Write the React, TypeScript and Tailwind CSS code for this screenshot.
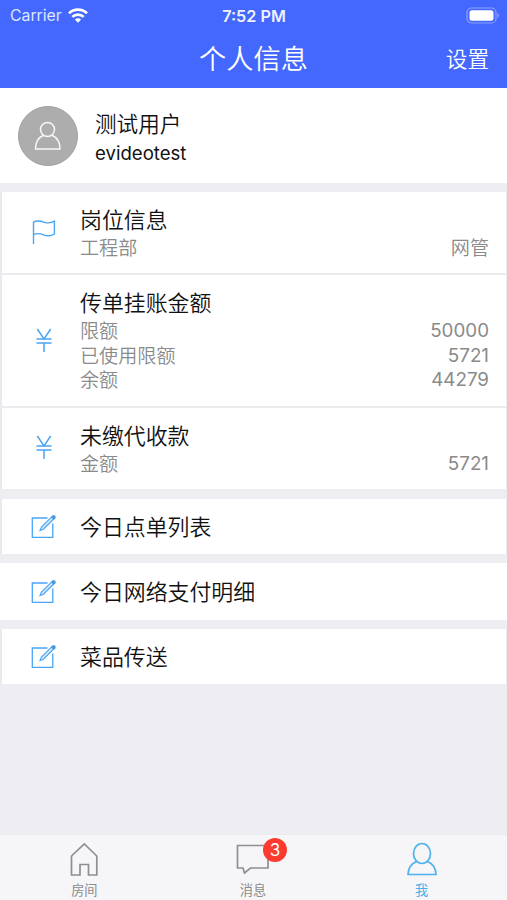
import type { ReactNode } from "react";

const YenIcon = () => (
  <svg width="16" height="26" viewBox="0 0 16 26" fill="none" stroke="#4aa5f5" strokeWidth="1.5">
    <path d="M1.300 1 8 11 14.700 1M.5 11h15M.5 15h15M8 15v9" />
  </svg>
);

const FlagIcon = () => (
  <svg width="24" height="26" viewBox="0 0 24 26" fill="none" stroke="#4aa5f5" strokeWidth="1.4">
    <path d="M1.500 24V2.200C5-.2 9.500 1.300 12.500 2.300 16 3.400 19 3 22.400 1.200V14C18 16.800 14.500 16 11.500 14.800 8 13.400 5 13 1.500 14.600" />
  </svg>
);

const EditIcon = () => (
  <svg width="26" height="26" viewBox="0 0 26 26" fill="none" stroke="#4aa5f5" strokeWidth="1.3">
    <path d="M16.500 4H1.300v19.300h20.500V9.500" />
    <path d="M9 16.500 10.400 13 21.600 1.900 23.800 4 12.400 15.200Z" fill="#cfe6fc" strokeWidth="1.100" />
    <path d="m20 3.200 2.100-2 2.300.3.200 2.500-2 2Z" fill="#4a96dd" stroke="none" />
  </svg>
);

type Detail = { label: string; value: string };

function InfoCard({ icon, title, details }: { icon: ReactNode; title: string; details: Detail[] }) {
  return (
    <section className="flex border-r border-l-2 border-r-[#ececf0] border-l-[#e9e9ee] bg-white pt-[13px] pr-[17px] pb-[13px]">
      <div className="flex w-[78px] shrink-0 items-center justify-center pl-[6px]">{icon}</div>
      <div className="flex-1">
        <h2 className="text-[21.9px] leading-[31px] font-[350] text-[#111111]">{title}</h2>
        {details.map((d) => (
          <div key={d.label} className="flex items-center justify-between leading-[24.4px] font-[350] text-[#8a8a8a]">
            <span className="text-[19.1px]">{d.label}</span>
            {/^\d+$/.test(d.value) ? (
              <span className="text-[18.8px] font-normal">{d.value}</span>
            ) : (
              <span className="text-[19.1px]">{d.value}</span>
            )}
          </div>
        ))}
      </div>
    </section>
  );
}

function LinkRow({ title, className }: { title: string; className: string }) {
  return (
    <section className={`flex items-center bg-white ${className}`}>
      <div className="w-[49px] shrink-0">
        <EditIcon />
      </div>
      <h2 className="pt-[1px] text-[21.9px] leading-[31px] font-[350] text-[#111111]">{title}</h2>
    </section>
  );
}

export default function App() {
  return (
    <div className="flex h-[900px] w-[507px] flex-col overflow-hidden bg-[#eeeef2] font-['Inter','Noto_Sans_CJK_SC',sans-serif] font-normal">
      <header className="h-[88px] shrink-0 bg-[#4468fe] text-white">
        <div className="grid h-[30px] grid-cols-[1fr_auto_1fr] items-center pr-[7px] pl-[8px] text-[16px] leading-[30px]">
          <div className="flex items-center gap-[6px] pl-[2px] text-[#dfe6ff]">
            <span className="pt-[1px] text-[15.8px]">Carrier</span>
            <svg width="20" height="15" viewBox="0 0 20 15" fill="none" stroke="white" strokeWidth="2.700">
              <path d="M1 5.400a12.800 12.800 0 0 1 18 0M4.300 8.900a8.100 8.100 0 0 1 11.400 0" />
              <path d="M6.900 11.600a4.400 4.400 0 0 1 6.200 0L10 14.700Z" fill="white" stroke="none" />
            </svg>
          </div>
          <span className="text-center text-[16.200px] font-semibold text-[#eef1ff]">7:52 PM</span>
          <svg className="justify-self-end" width="34" height="18" viewBox="0 0 34 18">
            <rect x="1" y="1" width="29" height="15" rx="4.500" fill="none" stroke="#8ba1ff" strokeWidth="1.200" />
            <rect x="3.500" y="3.200" width="24" height="10.600" rx="2.500" fill="white" />
            <path d="M31.500 6q3 2.500 0 5Z" fill="#8ba1ff" />
          </svg>
        </div>
        <div className="grid h-[58px] grid-cols-[1fr_auto_1fr] items-center px-[18px]">
          <span />
          <h1 className="pt-[1px] text-[27.200px] leading-[56px] font-[350]">个人信息</h1>
          <span className="justify-self-end text-[21.600px] leading-[56px] font-[350]">设置</span>
        </div>
      </header>

      <main className="flex-1">
        <section className="flex h-[95px] items-center bg-white pl-[18px]">
          <div className="flex size-[60px] items-center justify-center rounded-full border border-[#9f9f9f] bg-[#adadad]">
            <svg width="28" height="30" viewBox="0 0 28 30" fill="none" stroke="#f7f7f7" strokeWidth="1.500">
              <circle cx="13.500" cy="8.500" r="7" />
              <path d="M9.500 14.300C4.500 16.500 1.500 21 1.500 28h24.500c0-7-3-11.500-8-13.700" />
            </svg>
          </div>
          <div className="pt-[4px] pl-[17px] text-[#111111]">
            <p className="text-[21.600px] leading-[31px] font-[350]">测试用户</p>
            <p className="text-[18.600px] leading-[27px]">evideotest</p>
          </div>
        </section>

        <div className="mt-[9px] flex flex-col gap-[2px] bg-[#ebebef]">
          <InfoCard icon={<FlagIcon />} title="岗位信息" details={[{ label: "工程部", value: "网管" }]} />
          <InfoCard
            icon={<YenIcon />}
            title="传单挂账金额"
            details={[
              { label: "限额", value: "50000" },
              { label: "已使用限额", value: "5721" },
              { label: "余额", value: "44279" },
            ]}
          />
          <InfoCard icon={<YenIcon />} title="未缴代收款" details={[{ label: "金额", value: "5721" }]} />
        </div>

        <LinkRow title="今日点单列表" className="mt-[10px] h-[55px] border-r border-l-2 border-r-[#ececf0] border-l-[#e9e9ee] pl-[29px]" />
        <LinkRow title="今日网络支付明细" className="mt-[9px] h-[57px] pl-[31px]" />
        <LinkRow title="菜品传送" className="mt-[9px] h-[55px] border-r border-l-2 border-r-[#ececf0] border-l-[#e9e9ee] pl-[29px]" />
      </main>

      <nav className="grid h-[66px] shrink-0 grid-cols-3 border-t border-[#e9e9ed] bg-[#f6f6f8] pt-[7px] pr-[1px] text-[13.200px] leading-[18px] text-[#8c8c8c]">
        <div className="flex flex-col items-center gap-[4px]">
          <svg width="28" height="35" viewBox="0 0 28 35" fill="none" stroke="#8f8f8f" strokeWidth="1.700">
            <path d="M1.500 33V14L14.300 2l12.500 12v19h-8.300V22.500H10v10.500Z" />
          </svg>
          <span>房间</span>
        </div>
        <div className="flex flex-col items-center gap-[4px]">
          <div className="relative">
            <svg width="34" height="35" viewBox="0 0 34 35" fill="none" stroke="#8f8f8f" strokeWidth="1.700">
              <path d="M1.500 3.500h30.500v22.500H14.500L8.500 31 7 26H1.500Z" />
            </svg>
            <span className="absolute -top-[4px] left-[27px] flex size-[24px] items-center justify-center rounded-full bg-[#fb3b30] text-[17px] text-white">
              3
            </span>
          </div>
          <span>消息</span>
        </div>
        <div className="flex flex-col items-center gap-[4px] text-[#4cb1ec]">
          <svg width="30" height="35" viewBox="0 0 30 35" fill="none" stroke="#4cb1ec" strokeWidth="1.700">
            <ellipse cx="15" cy="11.500" rx="8.500" ry="10" />
            <path d="M9.500 19.500C4.500 21.500 1.300 25.500 1 32.500h28c-.3-7-3.500-11-8.500-13" />
          </svg>
          <span>我</span>
        </div>
      </nav>
    </div>
  );
}
